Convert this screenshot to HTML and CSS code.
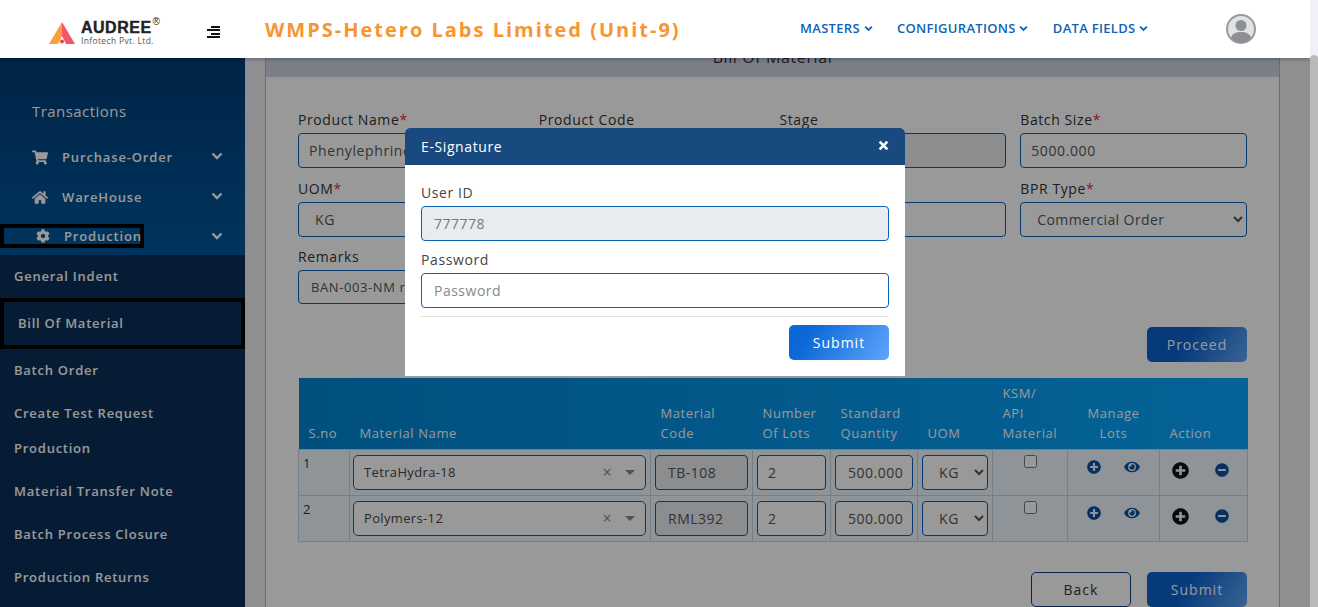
FILE: index.html
```html
<!DOCTYPE html>
<html lang="en">
<head>
    <meta charset="UTF-8">
    <meta name="viewport" content="width=device-width, initial-scale=1.0">
    <title>Bill Of Material</title>
    <link rel="stylesheet" href="styles.css">
</head>
<body>
    <svg class="icon-defs" width="0" height="0">
        <symbol id="i-cart" viewBox="0 0 576 512"><path d="M528.12 301.319l47.273-208C578.806 78.301 567.391 64 551.99 64H159.208l-9.166-44.81C147.758 8.021 137.93 0 126.529 0H24C10.745 0 0 10.745 0 24v16c0 13.255 10.745 24 24 24h69.883l70.248 343.435C147.325 417.1 136 435.222 136 456c0 30.928 25.072 56 56 56s56-25.072 56-56c0-15.674-6.447-29.835-16.824-40h209.647C430.447 426.165 424 440.326 424 456c0 30.928 25.072 56 56 56s56-25.072 56-56c0-22.172-12.888-41.332-31.579-50.405l5.517-24.276c3.413-15.018-8.002-29.319-23.403-29.319H218.117l-6.545-32h293.145c11.206 0 20.92-7.754 23.403-18.681z"/></symbol>
        <symbol id="i-home" viewBox="0 0 576 512"><path d="M280.37 148.26L96 300.11V464a16 16 0 0 0 16 16l112.06-.29a16 16 0 0 0 15.92-16V368a16 16 0 0 1 16-16h64a16 16 0 0 1 16 16v95.64a16 16 0 0 0 16 16.05L464 480a16 16 0 0 0 16-16V300L295.67 148.26a12.19 12.19 0 0 0-15.3 0zM571.6 251.47L488 182.56V44.05a12 12 0 0 0-12-12h-56a12 12 0 0 0-12 12v72.61L318.47 43a48 48 0 0 0-61 0L4.34 251.47a12 12 0 0 0-1.6 16.9l25.5 31A12 12 0 0 0 45.15 301l235.22-193.74a12.19 12.19 0 0 1 15.3 0L530.9 301a12 12 0 0 0 16.9-1.6l25.5-31a12 12 0 0 0-1.7-16.93z"/></symbol>
        <symbol id="i-cog" viewBox="0 0 512 512"><path d="M487.4 315.7l-42.6-24.6c4.3-23.2 4.3-47 0-70.2l42.6-24.6c4.9-2.8 7.1-8.6 5.5-14-11.1-35.6-30-67.8-54.7-94.6-3.8-4.1-10-5.1-14.8-2.3L380.8 110c-17.9-15.4-38.5-27.3-60.8-35.1V25.8c0-5.6-3.9-10.5-9.4-11.7-36.7-8.2-74.3-7.8-109.2 0-5.5 1.2-9.4 6.1-9.4 11.7V75c-22.2 7.9-42.8 19.8-60.8 35.1L88.7 85.5c-4.9-2.8-11-1.9-14.8 2.3-24.7 26.7-43.6 58.9-54.7 94.6-1.7 5.4.6 11.2 5.5 14L67.3 221c-4.3 23.2-4.3 47 0 70.2l-42.6 24.6c-4.9 2.8-7.1 8.6-5.5 14 11.1 35.6 30 67.8 54.7 94.6 3.8 4.1 10 5.1 14.8 2.3l42.6-24.6c17.9 15.4 38.5 27.3 60.8 35.1v49.2c0 5.6 3.9 10.5 9.4 11.7 36.7 8.2 74.3 7.8 109.2 0 5.5-1.2 9.4-6.1 9.4-11.7v-49.2c22.2-7.9 42.8-19.8 60.8-35.1l42.6 24.6c4.9 2.8 11 1.9 14.8-2.3 24.7-26.7 43.6-58.9 54.7-94.6 1.5-5.5-.7-11.3-5.6-14.1zM256 336c-44.1 0-80-35.9-80-80s35.9-80 80-80 80 35.9 80 80-35.9 80-80 80z"/></symbol>
        <symbol id="i-plus" viewBox="0 0 512 512"><path d="M256 8C119 8 8 119 8 256s111 248 248 248 248-111 248-248S393 8 256 8zm144 276c0 6.6-5.4 12-12 12h-92v92c0 6.6-5.4 12-12 12h-56c-6.6 0-12-5.4-12-12v-92h-92c-6.6 0-12-5.4-12-12v-56c0-6.6 5.4-12 12-12h92v-92c0-6.6 5.4-12 12-12h56c6.6 0 12 5.4 12 12v92h92c6.6 0 12 5.4 12 12v56z"/></symbol>
        <symbol id="i-minus" viewBox="0 0 512 512"><path d="M256 8C119 8 8 119 8 256s111 248 248 248 248-111 248-248S393 8 256 8zM124 296c-6.6 0-12-5.4-12-12v-56c0-6.6 5.4-12 12-12h264c6.6 0 12 5.4 12 12v56c0 6.6-5.4 12-12 12H124z"/></symbol>
        <symbol id="i-eye" viewBox="0 0 576 512"><path d="M572.52 241.4C518.29 135.59 410.93 64 288 64S57.68 135.64 3.48 241.41a32.35 32.35 0 0 0 0 29.19C57.71 376.41 165.07 448 288 448s230.32-71.64 284.52-177.41a32.35 32.35 0 0 0 0-29.19zM288 400a144 144 0 1 1 144-144 143.93 143.93 0 0 1-144 144zm0-240a95.31 95.31 0 0 0-25.31 3.79 47.85 47.85 0 0 1-66.9 66.9A95.78 95.78 0 1 0 288 160z"/></symbol>
        <symbol id="i-chev" viewBox="0 0 12 8"><path d="M1.5 1.5 6 6l4.5-4.5" fill="none" stroke="currentColor" stroke-width="2.4"/></symbol>
    </svg>

    <div class="page">
        <header class="topbar">
            <div class="logo">
                <svg class="logo-mark" viewBox="0 0 26 22" width="26" height="22">
                    <polygon points="13,0 0,22 10,22 13,15" fill="#f9a03c"/>
                    <polygon points="13,0 26,22 16,22 13,15" fill="#f6566c"/>
                    <polygon points="9,22 13,14 17,22" fill="#fff"/>
                    <circle cx="13" cy="19.5" r="2" fill="#e8404f"/>
                </svg>
                <div class="logo-text">
                    <div class="logo-name">AUDREE<sup>®</sup></div>
                    <div class="logo-sub">Infotech Pvt. Ltd.</div>
                </div>
            </div>
            <div class="burger"><span class="short"></span><span></span><span class="short"></span><span></span></div>
            <div class="app-title">WMPS-Hetero Labs Limited (Unit-9)</div>
            <nav class="topnav">
                <a>MASTERS <svg class="nav-chev"><use href="#i-chev"/></svg></a>
                <a>CONFIGURATIONS <svg class="nav-chev"><use href="#i-chev"/></svg></a>
                <a>DATA FIELDS <svg class="nav-chev"><use href="#i-chev"/></svg></a>
            </nav>
            <svg class="avatar" viewBox="0 0 30 30" width="30" height="30">
                <circle cx="15" cy="15" r="14" fill="#e0e3e6" stroke="#999" stroke-width="2"/>
                <circle cx="15" cy="11.5" r="5.5" fill="#8d8f92"/>
                <path d="M5 24c1-5 6-6 10-6s9 1 10 6c-2.500 3-6 5-10 5s-7.500-2-10-5z" fill="#8d8f92"/>
            </svg>
        </header>

        <div class="layout">
            <aside class="sidebar">
                <div class="side-top">
                    <div class="side-title">Transactions</div>
                    <div class="side-item">
                        <svg class="side-icon"><use href="#i-cart"/></svg>
                        <span>Purchase-Order</span>
                        <svg class="side-chev"><use href="#i-chev"/></svg>
                    </div>
                    <div class="side-item">
                        <svg class="side-icon"><use href="#i-home"/></svg>
                        <span>WareHouse</span>
                        <svg class="side-chev"><use href="#i-chev"/></svg>
                    </div>
                    <div class="side-item side-current">
                        <div class="focus-box">
                            <svg class="side-icon cog"><use href="#i-cog"/></svg>
                            <span>Production</span>
                        </div>
                        <svg class="side-chev"><use href="#i-chev"/></svg>
                    </div>
                </div>
                <ul class="submenu">
                    <li>General Indent</li>
                    <li class="active">Bill Of Material</li>
                    <li>Batch Order</li>
                    <li class="two-line">Create Test Request Production</li>
                    <li>Material Transfer Note</li>
                    <li>Batch Process Closure</li>
                    <li>Production Returns</li>
                </ul>
            </aside>

            <main class="content">
                <section class="card">
                    <div class="card-head">Bill Of Material</div>
                    <div class="card-body">
                        <div class="form-grid">
                            <div class="field">
                                <label>Product Name<span class="req">*</span></label>
                                <input type="text" value="Phenylephrine">
                            </div>
                            <div class="field">
                                <label>Product Code</label>
                                <input type="text" class="locked">
                            </div>
                            <div class="field">
                                <label>Stage</label>
                                <input type="text" class="locked">
                            </div>
                            <div class="field">
                                <label>Batch Size<span class="req">*</span></label>
                                <input type="text" value="5000.000">
                            </div>
                            <div class="field">
                                <label>UOM<span class="req">*</span></label>
                                <input type="text" class="indent" value="KG">
                            </div>
                            <div class="field">
                                <label>&nbsp;</label>
                                <input type="text">
                            </div>
                            <div class="field">
                                <label>&nbsp;</label>
                                <input type="text">
                            </div>
                            <div class="field">
                                <label>BPR Type<span class="req">*</span></label>
                                <select class="bpr"><option>Commercial Order</option></select>
                            </div>
                            <div class="field field-remarks">
                                <label>Remarks</label>
                                <input type="text" value="BAN-003-NM r">
                            </div>
                        </div>

                        <div class="proceed-row"><button class="btn btn-blue">Proceed</button></div>

                        <table class="bom-table">
                            <colgroup>
                                <col class="c-sno"><col class="c-name"><col class="c-code"><col class="c-lots">
                                <col class="c-qty"><col class="c-uom"><col class="c-ksm"><col class="c-manage"><col class="c-action">
                            </colgroup>
                            <thead>
                                <tr>
                                    <th>S.no</th>
                                    <th>Material Name</th>
                                    <th>Material<br>Code</th>
                                    <th>Number<br>Of Lots</th>
                                    <th>Standard<br>Quantity</th>
                                    <th>UOM</th>
                                    <th>KSM/<br>API<br>Material</th>
                                    <th class="center">Manage<br>Lots</th>
                                    <th>Action</th>
                                </tr>
                            </thead>
                            <tbody>
                                <tr>
                                    <td>1</td>
                                    <td><div class="combo"><span>TetraHydra-18</span><i class="combo-x">×</i><i class="combo-arrow"></i></div></td>
                                    <td><input type="text" class="locked code" value="TB-108"></td>
                                    <td><input type="text" value="2"></td>
                                    <td><input type="text" class="qty" value="500.000"></td>
                                    <td><select class="uom"><option>KG</option></select></td>
                                    <td class="center"><input type="checkbox"></td>
                                    <td><div class="icon-pair manage"><svg class="ic-blue p"><use href="#i-plus"/></svg><svg class="ic-blue e"><use href="#i-eye"/></svg></div></td>
                                    <td><div class="icon-pair act"><svg class="ic-black"><use href="#i-plus"/></svg><svg class="ic-blue m"><use href="#i-minus"/></svg></div></td>
                                </tr>
                                <tr>
                                    <td>2</td>
                                    <td><div class="combo"><span>Polymers-12</span><i class="combo-x">×</i><i class="combo-arrow"></i></div></td>
                                    <td><input type="text" class="locked code" value="RML392"></td>
                                    <td><input type="text" value="2"></td>
                                    <td><input type="text" class="qty" value="500.000"></td>
                                    <td><select class="uom"><option>KG</option></select></td>
                                    <td class="center"><input type="checkbox"></td>
                                    <td><div class="icon-pair manage"><svg class="ic-blue p"><use href="#i-plus"/></svg><svg class="ic-blue e"><use href="#i-eye"/></svg></div></td>
                                    <td><div class="icon-pair act"><svg class="ic-black"><use href="#i-plus"/></svg><svg class="ic-blue m"><use href="#i-minus"/></svg></div></td>
                                </tr>
                            </tbody>
                        </table>

                        <div class="form-actions">
                            <button class="btn btn-outline">Back</button>
                            <button class="btn btn-blue">Submit</button>
                        </div>
                    </div>
                </section>
            </main>
        </div>

        <div class="backdrop"></div>

        <div class="modal">
            <div class="modal-head">
                <span>E-Signature</span>
                <svg class="modal-close" viewBox="0 0 10 10"><path d="M1.500 1.500l7 7M8.500 1.500l-7 7" stroke="#fff" stroke-width="2.400"/></svg>
            </div>
            <div class="modal-body">
                <label>User ID</label>
                <input type="text" class="locked" value="777778" disabled>
                <label>Password</label>
                <input type="password" placeholder="Password">
            </div>
            <div class="modal-foot">
                <button class="btn btn-bright">Submit</button>
            </div>
        </div>
    </div>

    <div class="scrollbar"><div class="scroll-thumb"></div></div>
</body>
</html>
```

FILE: styles.css
```css
* {
    box-sizing: border-box;
}
body {
    font-family: "Open Sans", sans-serif;
    font-size: 14px;
    letter-spacing: 0.6px;
    color: #333;
    margin: 0;
    height: 607px;
    overflow: hidden;
    display: flex;
}
.icon-defs {
    position: absolute;
}
.page {
    position: relative;
    width: 1310px;
    height: 607px;
    overflow: hidden;
    background-color: #eeeef3;
    display: flex;
    flex-direction: column;
}
.scrollbar {
    width: 8px;
    padding-top: 55px;
    background-color: #f0f0fa;
}
.scroll-thumb {
    height: 100%;
    border-radius: 4px 4px 0 0;
    background-color: #bababa;
}

/* top bar */
.topbar {
    position: relative;
    z-index: 20;
    flex: none;
    height: 58px;
    background-color: #fff;
    box-shadow: 0 1px 4px rgba(0, 0, 0, 0.3);
    display: flex;
    align-items: center;
}
.logo {
    width: 207px;
    padding-left: 49px;
    display: flex;
    align-items: center;
    gap: 6px;
}
.logo-mark {
    margin-top: 7px;
}
.logo-text {
    margin-top: 6px;
}
.logo-name {
    font-family: "Liberation Sans", sans-serif;
    font-size: 16px;
    font-weight: 700;
    line-height: 17px;
    letter-spacing: 0.5px;
    color: #222;
    position: relative;
    -webkit-text-stroke: 0.4px #222;
}
.logo-name sup {
    position: absolute;
    top: -6px;
    margin-left: 1px;
    font-size: 10px;
    font-weight: 400;
    -webkit-text-stroke: 0;
}
.logo-sub {
    font-size: 8.500px;
    line-height: 10px;
    letter-spacing: 0.35px;
    color: #555;
}
.burger {
    width: 13px;
    margin-top: 6px;
    display: flex;
    flex-direction: column;
    align-items: flex-end;
    gap: 1.500px;
}
.burger span {
    display: block;
    width: 13px;
    height: 2px;
    background-color: #111;
}
.burger .short {
    width: 9px;
}
.app-title {
    margin-left: 45px;
    width: 535px;
    font-size: 20px;
    font-weight: 700;
    letter-spacing: 2px;
    color: #f79533;
}
.topnav {
    display: flex;
    gap: 24.500px;
    margin-top: -2px;
}
.topnav a {
    font-size: 13px;
    font-weight: 600;
    letter-spacing: 0.3px;
    color: #0f63b4;
    white-space: nowrap;
}
.nav-chev {
    width: 9px;
    height: 7px;
    margin-left: 0;
    vertical-align: 1px;
}
.avatar {
    margin-left: 78px;
}

/* sidebar */
.layout {
    flex: 1;
    min-height: 0;
    display: flex;
}
.sidebar {
    flex: none;
    width: 245px;
    overflow: hidden;
    background-color: #0a3058;
    font-weight: 600;
    color: #fff;
}
.side-top {
    height: 197px;
    padding-top: 42px;
    background: linear-gradient(180deg, #003d77 0%, #00589b 100%);
}
.side-title {
    padding-left: 32px;
    height: 24px;
    line-height: 24px;
    font-size: 15px;
    font-weight: 400;
    letter-spacing: 0.45px;
    margin-bottom: 14px;
    margin-top: -1px;
}
.side-item {
    height: 40px;
    padding: 0 22px 0 32px;
    display: flex;
    align-items: center;
    font-size: 13px;
    letter-spacing: 0.85px;
}
.side-item > span {
    flex: 1;
    margin-left: 14px;
}
.side-icon {
    width: 16px;
    height: 15px;
    fill: #fff;
}
.side-chev {
    width: 12px;
    height: 8px;
    margin-top: -3px;
}
.side-current {
    padding-left: 0;
    height: 36px;
    margin-top: 8px;
    align-items: flex-start;
    justify-content: space-between;
}
.side-current .side-chev {
    margin-top: 7px;
}
.focus-box {
    width: 144px;
    height: 24px;
    margin-top: -1px;
    border: 4px solid #000;
    padding-left: 32px;
    display: flex;
    align-items: center;
    gap: 14px;
    background-color: #00589b;
}
.focus-box .cog {
    width: 14px;
    height: 14px;
    flex: none;
}
.submenu {
    list-style: none;
    margin: 0;
    padding: 0;
    font-size: 13px;
    letter-spacing: 0.75px;
}
.submenu li {
    height: 43px;
    line-height: 43px;
    padding-left: 14px;
}
.submenu .active {
    height: 51px;
    line-height: 43px;
    padding-left: 14px;
    border: 4px solid #000;
}
.submenu .two-line {
    height: 78px;
    line-height: 35px;
    padding-top: 4px;
    padding-right: 30px;
}

/* main card */
.content {
    flex: 1;
    min-width: 0;
    padding: 0 30px 0 20px;
}
.card {
    margin-top: -21px;
    border: 1px solid #b4b4b4;
    border-top: 0;
    background-color: #fff;
    height: 700px;
}
.card-head {
    height: 40px;
    line-height: 40px;
    text-align: center;
    font-size: 16px;
    background-color: #cdd4e6;
}
.card-body {
    padding: 32px 32px 0;
}
.form-grid {
    display: grid;
    grid-template-columns: repeat(4, 1fr);
    column-gap: 14px;
    row-gap: 10px;
}
.field label {
    display: block;
    height: 21px;
    line-height: 21px;
    margin-bottom: 3px;
    white-space: nowrap;
}
.field-remarks {
    margin-top: -1px;
}
.field-remarks input[type="text"] {
    height: 34px;
    padding-left: 12px;
    font-size: 13px;
}
.req {
    color: #d33;
}
input[type="text"],
input[type="password"],
select {
    display: block;
    width: 100%;
    height: 35px;
    padding: 0 10px;
    border: 1px solid #0a62b5;
    border-radius: 4px;
    background-color: #fff;
    font-family: "Open Sans", sans-serif;
    font-size: 14px;
    letter-spacing: 0.6px;
    color: #555;
}
.locked {
    background-color: #e9ecef !important;
}
.field .indent {
    padding-left: 16px;
}
.field .bpr {
    padding-left: 12px;
    letter-spacing: 0.4px;
}
.proceed-row {
    margin-top: 23px;
    display: flex;
    justify-content: flex-end;
}
.btn {
    width: 100px;
    height: 35px;
    border: none;
    border-radius: 5px;
    font-family: "Open Sans", sans-serif;
    font-size: 14px;
    letter-spacing: 1px;
    color: #fff;
    cursor: pointer;
}
.btn-blue {
    background: linear-gradient(120deg, #0b62cc 40%, #5fa5fa 100%);
}
.btn-bright {
    background: linear-gradient(120deg, #0b68d8 20%, #5fa5fa 100%);
}
.btn-outline {
    border: 1px solid #0a3f7a;
    background-color: #fff;
    color: #333;
}

/* material table */
.bom-table {
    margin-top: 16px;
    width: 100%;
    table-layout: fixed;
    border-collapse: collapse;
}
.c-sno { width: 51px; }
.c-name { width: 301px; }
.c-code { width: 102px; }
.c-lots { width: 78px; }
.c-qty { width: 87px; }
.c-uom { width: 75px; }
.c-ksm { width: 75px; }
.c-manage { width: 92px; }
.c-action { width: 88px; }
.bom-table thead tr {
    height: 71px;
    background: linear-gradient(90deg, #0085d2 0%, #0aa4fb 100%);
}
.bom-table th {
    padding: 0 0 6px 10px;
    vertical-align: bottom;
    text-align: left;
    font-size: 13px;
    font-weight: 400;
    line-height: 20px;
    color: #fff;
}
.bom-table th.center {
    padding-left: 0;
    text-align: center;
}
.bom-table td {
    height: 46px;
    padding: 5px 4px 0;
    vertical-align: top;
    font-size: 13px;
    background-color: #eef7ff;
    border: 1px solid #c5d2e0;
}
.bom-table tbody td:first-child {
    padding: 4px 0 0 4px;
}
.bom-table td.center {
    text-align: center;
    padding-top: 0;
}
.bom-table input[type="checkbox"] {
    width: 13px;
    height: 13px;
    margin: 5px 0 0;
}
.bom-table td input[type="text"] {
    height: 35px;
    letter-spacing: 0.5px;
}
.qty {
    padding: 0 0 0 12px !important;
    text-align: left;
}
.code {
    padding-left: 12px !important;
}
.uom {
    padding-left: 12px;
}
.combo {
    height: 35px;
    margin-left: -1px;
    border: 1px solid #0a62b5;
    border-radius: 5px;
    padding: 0 10px 0 10px;
    display: flex;
    align-items: center;
    background-color: #fff;
    color: #444;
    letter-spacing: 0.35px;
}
.combo span {
    flex: 1;
}
.combo-x {
    font-style: normal;
    font-size: 16px;
    color: #888;
    margin-right: 13px;
}
.combo-arrow {
    width: 0;
    height: 0;
    border-left: 5px solid transparent;
    border-right: 5px solid transparent;
    border-top: 5px solid #888;
}
.icon-pair {
    display: flex;
    align-items: flex-start;
}
.icon-pair svg {
    flex: none;
    fill: currentColor;
}
.manage {
    padding: 5px 0 0 15px;
    gap: 23px;
}
.manage .p {
    width: 14px;
    height: 14px;
}
.manage .e {
    width: 16px;
    height: 14px;
}
.act {
    padding: 7px 0 0 8px;
    gap: 26px;
    align-items: center;
}
.act .ic-black {
    width: 17px;
    height: 17px;
}
.act .m {
    width: 14px;
    height: 14px;
}
.ic-blue {
    color: #0d4fa3;
}
.ic-black {
    color: #111;
}
.form-actions {
    margin-top: 30px;
    display: flex;
    justify-content: flex-end;
    gap: 16px;
}

/* signature dialog */
.backdrop {
    position: absolute;
    z-index: 10;
    left: 0;
    right: 0;
    top: 58px;
    bottom: 0;
    background-color: rgba(0, 0, 0, 0.4);
}
.modal {
    position: absolute;
    z-index: 30;
    left: 405px;
    top: 128px;
    width: 500px;
    height: 248px;
    background-color: #fff;
    border-radius: 5px 5px 0 0;
}
.modal-head {
    height: 37px;
    padding: 0 16px;
    border-radius: 5px 5px 0 0;
    background-color: #18497f;
    color: #fff;
    display: flex;
    align-items: center;
    justify-content: space-between;
}
.modal-close {
    width: 11px;
    height: 11px;
    margin-top: -3px;
    margin-right: 0;
}
.modal-body {
    padding: 17px 16px 0;
}
.modal-body label {
    display: block;
    height: 21px;
    line-height: 21px;
    color: #444;
    margin-bottom: 3px;
}
.modal-body input {
    margin-bottom: 8px;
    padding-left: 12px;
    color: #777;
    letter-spacing: 0.5px;
}
.modal-body input::placeholder {
    color: #888;
}
.modal-foot {
    margin: 0 16px;
    padding-top: 8px;
    border-top: 1px solid #e3e3e3;
    display: flex;
    justify-content: flex-end;
}
```
